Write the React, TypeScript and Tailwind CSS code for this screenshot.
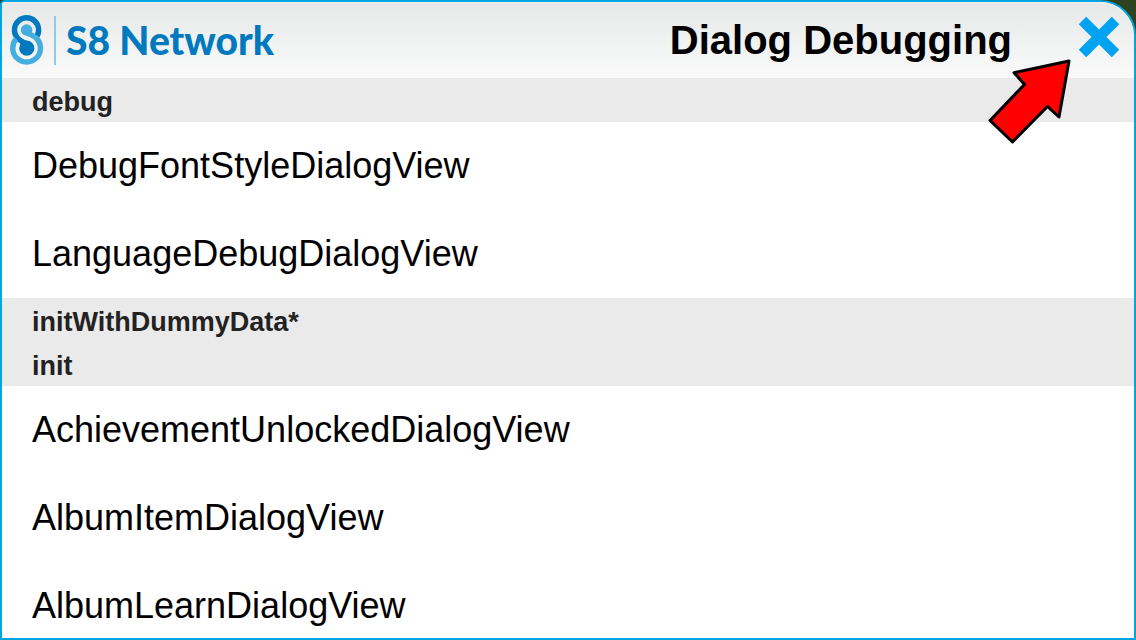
import React from "react";

type Section = { title: string; items: string[] };

const sections: Section[] = [
  { title: "debug", items: ["DebugFontStyleDialogView", "LanguageDebugDialogView"] },
  { title: "initWithDummyData*", items: [] },
  {
    title: "init",
    items: ["AchievementUnlockedDialogView", "AlbumItemDialogView", "AlbumLearnDialogView"],
  },
];

function Logo() {
  return (
    <div className="flex items-center">
      <svg viewBox="9 14 35 52" className="h-[52px] w-[35px]" aria-hidden="true">
        <path
          d="M36.5 36.8 A12.1 12.1 0 1 0 16.6 36.8 Q19.5 41 27 44"
          fill="none"
          stroke="#0079bf"
          strokeWidth="5.4"
        />
        <path
          d="M16.2 38.9 A13.9 13.9 0 1 0 37 38.9 Q34 35.5 27 33.2"
          fill="none"
          stroke="#45aee0"
          strokeWidth="5.4"
        />
        <circle cx="26.6" cy="30" r="5.8" fill="#45aee0" />
        <circle cx="26.8" cy="48.2" r="7.6" fill="#0079bf" />
        <path
          d="M20.6 34.5 Q23 37.6 28 38.8 Q35 41 36.4 47.5"
          fill="none"
          stroke="#f2f3f3"
          strokeWidth="2.4"
        />
      </svg>
      <span className="ml-2.5 h-[49px] w-0.5 bg-[#8ccbe9]" />
      <span className="ml-2.5 font-['Lato',sans-serif] text-[39px] leading-none font-black text-[#0079bf]">
        S8 Network
      </span>
    </div>
  );
}

function Arrow() {
  return (
    <svg
      viewBox="984 54 92 94"
      className="pointer-events-none absolute top-[52px] right-[58px] z-10 h-[94px] w-[92px]"
      aria-hidden="true"
    >
      <path
        d="M1069 61 L1014 72.7 L1024.6 84.4 L990 120.5 L1012.5 142 L1047.5 106.5 L1059 117 Z"
        fill="#ff0000"
        stroke="#000"
        strokeWidth="3"
        strokeLinejoin="round"
      />
    </svg>
  );
}

export default function App() {
  return (
    <div className="h-screen bg-[linear-gradient(120deg,#2c4220_97%,#10180c)] font-['Liberation_Sans',Arial,sans-serif]">
      <main className="relative flex h-full flex-col overflow-hidden rounded-tl-[5px] rounded-tr-[36px] border-2 border-[#00a6e2] bg-white">
        <header className="flex h-[76px] shrink-0 items-center justify-between rounded-tr-[34px] bg-linear-to-b from-[#e6e8e8] to-[#fafafa] pr-3.5 pl-[7px] shadow-[inset_0_1px_1px_#fbeeee]">
          <Logo />
          <div className="flex items-center">
            <h1 className="text-[40px] leading-none font-bold text-black">Dialog Debugging</h1>
            <button type="button" aria-label="Close" className="ml-[66px] cursor-pointer pb-1.5">
              <svg viewBox="0 0 42 42" className="h-[42px] w-[42px]" aria-hidden="true">
                <path d="M4.5 4.5 L37.5 37.5 M37.5 4.5 L4.5 37.5" stroke="#00a2f2" strokeWidth="10.5" />
              </svg>
            </button>
          </div>
        </header>
        <Arrow />
        <div className="min-h-0 flex-1 overflow-y-auto [scrollbar-width:none]">
          {sections.map((section) => (
            <section key={section.title}>
              <h2 className="flex h-11 items-center bg-[#eaeaea] px-[30px] pt-1 text-[27px] leading-none font-bold text-[#222]">
                {section.title}
              </h2>
              <ul>
                {section.items.map((item) => (
                  <li key={item} className="flex h-22 items-center px-[30px] text-4xl text-black">
                    {item}
                  </li>
                ))}
              </ul>
            </section>
          ))}
        </div>
      </main>
    </div>
  );
}
